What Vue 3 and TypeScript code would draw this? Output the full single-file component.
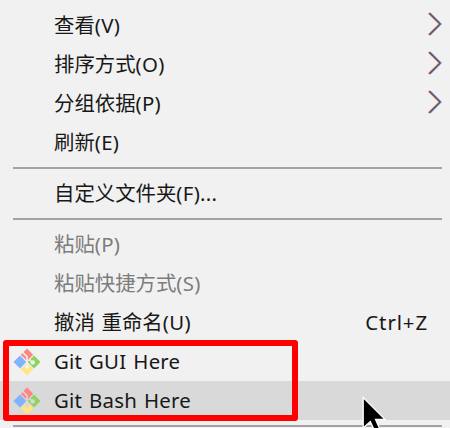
<script setup lang="ts">
interface Item {
  id: string
  label: string
  suffix?: string
  shortcut?: string
  arrow?: boolean
  disabled?: boolean
  git?: boolean
  active?: boolean
}

const sections: Item[][] = [
  [
    { id: 'view', label: '查看', suffix: '(V)', arrow: true },
    { id: 'sort', label: '排序方式', suffix: '(O)', arrow: true },
    { id: 'group', label: '分组依据', suffix: '(P)', arrow: true },
    { id: 'refresh', label: '刷新', suffix: '(E)' },
  ],
  [{ id: 'customize', label: '自定义文件夹', suffix: '(F)...' }],
  [
    { id: 'paste', label: '粘贴', suffix: '(P)', disabled: true },
    { id: 'paste-link', label: '粘贴快捷方式', suffix: '(S)', disabled: true },
    { id: 'undo', label: '撤消 重命名', suffix: '(U)', shortcut: 'Ctrl+Z' },
    { id: 'git-gui', label: 'Git GUI Here', git: true },
    { id: 'git-bash', label: 'Git Bash Here', git: true, active: true },
  ],
]
</script>

<template>
  <div class="menu">
    <div v-for="(section, i) in sections" :key="i" class="section">
      <div
        v-for="item in section"
        :key="item.id"
        class="item"
        :class="{ disabled: item.disabled, active: item.active, git: item.git }"
      >
        <span class="icon">
          <svg v-if="item.git" width="28" height="28" viewBox="0 0 28 28">
            <path d="M14 .5 20.2 6.8 14 13 7.8 6.8Z" fill="#ff8585" />
            <path d="M7 7.5 13.3 14 7 20.5.5 14Z" fill="#80b3ff" />
            <path d="M21 7.5 27.5 14 21 20.5 14.7 14Z" fill="#8dd35f" />
            <path d="M14 15 20.3 21 14 27.5 7.7 21Z" fill="#ffe680" />
            <path class="cut" d="M9.6 4.2 14 8.6V13" />
            <path class="cut" d="M16.5 11.5 19 14" />
            <circle class="dot" cx="19.8" cy="14.4" r="2.2" />
            <path class="cut" d="M14 14.5V18.5" />
            <circle class="dot" cx="14" cy="18.8" r="2.1" />
          </svg>
        </span>
        <span class="label">{{ item.label }}<span v-if="item.suffix" class="suffix">{{ item.suffix }}</span></span>
        <span v-if="item.shortcut" class="shortcut">{{ item.shortcut }}</span>
        <svg v-if="item.arrow" class="arrow" width="16" height="24" viewBox="0 0 16 24">
          <path d="M1.2 1.1 12.1 12 1.2 22.9" stroke="#efc394" />
          <path d="M3.2 1.1 14.1 12 3.2 22.9" stroke="#83bcef" />
          <path d="M2.2 1.1 13.1 12 2.2 22.9" stroke="#6a4a5c" />
        </svg>
      </div>
    </div>
    <div class="marker"></div>
    <svg class="cursor" width="30" height="42" viewBox="0 0 30 42">
      <path d="M1.2 1.5V32L8.3 25.5 14.5 39 19.5 36.5 13.5 23.5H23.2Z" />
    </svg>
  </div>
</template>

<style>
body {
  margin: 0;
  overflow: hidden;
}
</style>

<style scoped>
.menu {
  position: relative;
  box-sizing: border-box;
  width: 450px;
  height: 428px;
  padding-top: 6px;
  overflow: hidden;
  background: #f1f1f1;
  color: #181818;
  font: 20.4px/39px "Noto Sans", "Noto Sans CJK SC", sans-serif;
}
.section::after {
  content: "";
  display: block;
  height: 2px;
  margin: 5px 8px 5px 13px;
  background: #a3a3a3;
}
.item {
  display: flex;
  align-items: center;
  height: 39px;
  white-space: pre;
}
.icon {
  display: flex;
  width: 41px;
  padding-left: 13px;
}
.cut {
  fill: none;
  stroke: #f1f1f1;
  stroke-width: 1.6;
}
.dot {
  fill: #f1f1f1;
}
.active {
  background: #d9d9d9;
}
.active .cut {
  stroke: #d9d9d9;
}
.active .dot {
  fill: #d9d9d9;
}
.label {
  flex: 1;
  word-spacing: 1.5px;
}
.suffix {
  letter-spacing: 0.3px;
}
.git .label {
  letter-spacing: 0.2px;
}
.disabled {
  color: #7c7c7c;
}
.shortcut {
  margin-right: 22px;
  letter-spacing: 0.9px;
}
.arrow {
  margin: -3px 7px 0 0;
  fill: none;
  stroke-width: 1.5;
}
.marker {
  position: absolute;
  left: 3px;
  top: 340px;
  box-sizing: border-box;
  width: 295px;
  height: 81px;
  border: 6px solid #f00;
  border-radius: 3px;
}
.cursor {
  position: absolute;
  left: 362px;
  top: 396px;
  fill: #000;
  stroke: #fff;
  stroke-width: 1.3;
}
</style>
